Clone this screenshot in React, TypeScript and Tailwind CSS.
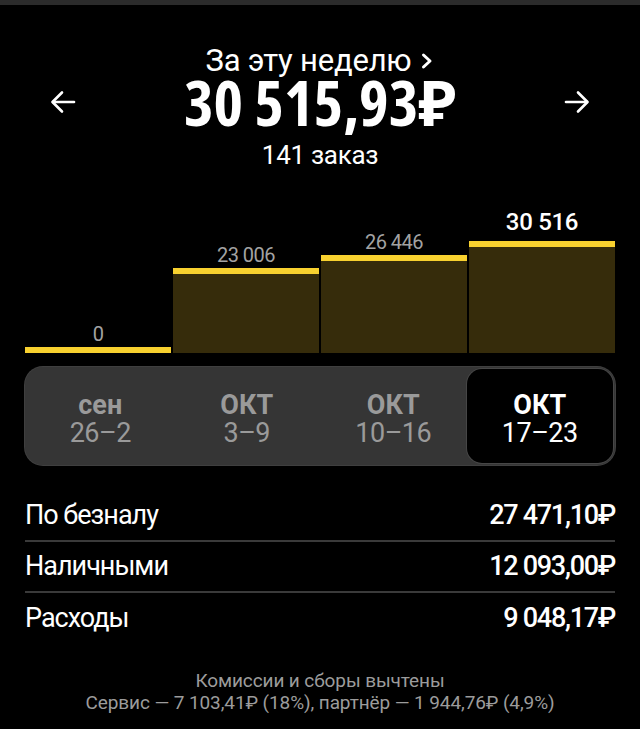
import React from 'react';

const bars = [
    { label: '0', height: 6 },
    { label: '23 006', height: 85 },
    { label: '26 446', height: 98 },
    { label: '30 516', height: 112, active: true },
];

const weeks = [
    { month: 'сен', range: '26–2' },
    { month: 'ОКТ', range: '3–9' },
    { month: 'ОКТ', range: '10–16' },
    { month: 'ОКТ', range: '17–23', active: true },
];

const rows = [
    { title: 'По безналу', value: '27 471,10₽' },
    { title: 'Наличными', value: '12 093,00₽' },
    { title: 'Расходы', value: '9 048,17₽' },
];

const ArrowIcon = ({ dir }: { dir: 'left' | 'right' }) => (
    <svg width="26" height="26" viewBox="0 0 26 26" fill="none" stroke="white" strokeWidth="2.6" strokeLinecap="round" strokeLinejoin="round">
        {dir === 'left' ? (
            <>
                <path d="M24 13H3" />
                <path d="M12 3.5L2.5 13l9.5 9.5" />
            </>
        ) : (
            <>
                <path d="M2 13h21" />
                <path d="M14 3.5l9.5 9.5-9.5 9.5" />
            </>
        )}
    </svg>
);

export default function App() {
    return (
        <div
            className="w-[640px] h-[729px] bg-black text-white overflow-hidden flex flex-col"
            style={{ fontFamily: 'Roboto, "Noto Sans", sans-serif' }}
        >
            {/* status strip */}
            <div className="h-[5px] bg-[#2b2b2b]" />

            {/* Header */}
            <div className="flex flex-col items-center pt-[36px]">
                <div className="flex items-center gap-[9px] text-[31px] leading-[40px] tracking-[-0.2px]">
                    <span>За эту неделю</span>
                    <svg width="14" height="20" viewBox="0 0 14 20" fill="none" stroke="white" strokeWidth="3" strokeLinecap="round" strokeLinejoin="round">
                        <path d="M3.5 4l6.5 6-6.5 6" />
                    </svg>
                </div>
                <div className="w-full flex items-center justify-between px-[50px] -mt-[5px]">
                    <ArrowIcon dir="left" />
                    <div
                        className="text-[63px] leading-[52px] font-bold"
                        style={{ fontFamily: '"Open Sans", "Noto Sans", sans-serif', fontStretch: '75%' }}
                    >
                        30 515,93₽
                    </div>
                    <ArrowIcon dir="right" />
                </div>
                <div className="text-[26px] leading-[36px] mt-[9px] tracking-[-0.3px]">141 заказ</div>
            </div>

            {/* Chart */}
            <div className="px-[25px] h-[180px] flex items-end gap-[2px]">
                {bars.map((b, i) => (
                    <div key={i} className="flex-1 flex flex-col items-center">
                        <div
                            className={
                                b.active
                                    ? 'text-[24px] leading-[26px] font-medium text-white mb-[6px] tracking-[-0.3px]'
                                    : 'text-[20px] leading-[20px] text-[#a3a3a3] mb-[3px] tracking-[-0.5px]'
                            }
                        >
                            {b.label}
                        </div>
                        <div className="w-full bg-[#362c0b] flex flex-col" style={{ height: b.height }}>
                            <div className="h-[6px] bg-[#f8d12f]" />
                        </div>
                    </div>
                ))}
            </div>

            {/* Week switcher */}
            <div className="mx-[25px] mt-[14px] h-[98px] rounded-[18px] bg-[#353535] ring-1 ring-[#3f3f3f] p-[2px] flex">
                {weeks.map((w, i) => (
                    <div
                        key={i}
                        className={
                            'flex-1 flex flex-col items-center justify-center pt-[6px] rounded-[15px] ' +
                            (w.active ? 'bg-black text-white ring-1 ring-[#464646]' : 'text-[#9a9a9a]')
                        }
                    >
                        <div className="text-[27px] leading-[28px] font-bold">{w.month}</div>
                        <div className="text-[27px] leading-[28px] tracking-[-0.5px]">{w.range}</div>
                    </div>
                ))}
            </div>

            {/* Totals */}
            <div className="mt-[26px] px-[25px] flex flex-col">
                {rows.map((r, i) => (
                    <div
                        key={i}
                        className={
                            'flex items-center justify-between h-[51px] ' +
                            (i < rows.length - 1 ? 'border-b-2 border-[#3a3a3a]' : '')
                        }
                    >
                        <span className="text-[27px] tracking-[-1px]">{r.title}</span>
                        <span className="text-[27px] font-medium tracking-[-1.3px]">{r.value}</span>
                    </div>
                ))}
            </div>

            {/* Footer */}
            <div className="mt-[26px] flex flex-col items-center text-[19px] leading-[22px] text-[#9c9c9c] tracking-[-0.1px]">
                <span>Комиссии и сборы вычтены</span>
                <span>Сервис — 7 103,41₽ (18%), партнёр — 1 944,76₽ (4,9%)</span>
            </div>
        </div>
    );
}
